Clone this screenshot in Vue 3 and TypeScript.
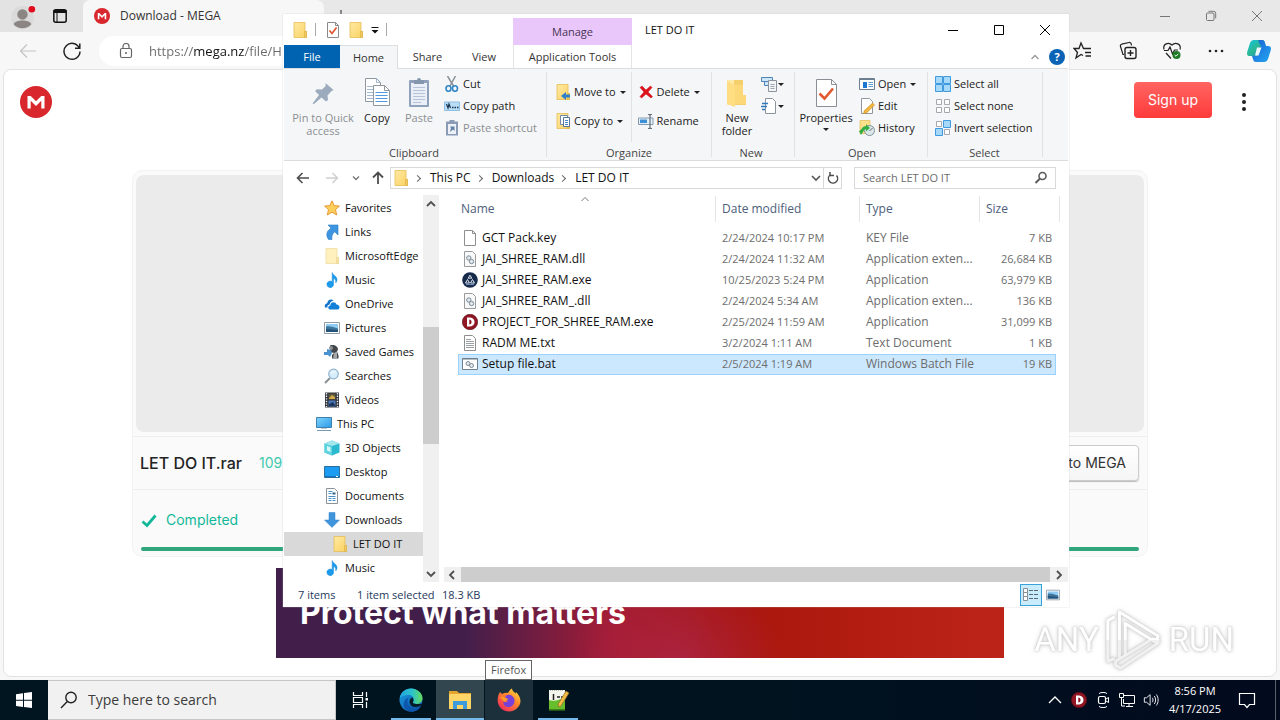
<script setup lang="ts">
import { ref } from 'vue'

interface TreeItem { label: string; icon: string; level: number; selected?: boolean }
interface FileRow { name: string; icon: string; date: string; type: string; size: string; selected?: boolean }

const tree: TreeItem[] = [
  { label: 'Favorites', icon: 'star', level: 1 },
  { label: 'Links', icon: 'link', level: 1 },
  { label: 'MicrosoftEdge', icon: 'folder-pale', level: 1 },
  { label: 'Music', icon: 'music', level: 1 },
  { label: 'OneDrive', icon: 'cloud', level: 1 },
  { label: 'Pictures', icon: 'picture', level: 1 },
  { label: 'Saved Games', icon: 'games', level: 1 },
  { label: 'Searches', icon: 'search-blue', level: 1 },
  { label: 'Videos', icon: 'video', level: 1 },
  { label: 'This PC', icon: 'pc', level: 0 },
  { label: '3D Objects', icon: 'cube', level: 1 },
  { label: 'Desktop', icon: 'desktop', level: 1 },
  { label: 'Documents', icon: 'document', level: 1 },
  { label: 'Downloads', icon: 'download', level: 1 },
  { label: 'LET DO IT', icon: 'folder', level: 2, selected: true },
  { label: 'Music', icon: 'music', level: 1 },
]

const files: FileRow[] = [
  { name: 'GCT Pack.key', icon: 'page', date: '2/24/2024 10:17 PM', type: 'KEY File', size: '7 KB' },
  { name: 'JAI_SHREE_RAM.dll', icon: 'dll', date: '2/24/2024 11:32 AM', type: 'Application exten...', size: '26,684 KB' },
  { name: 'JAI_SHREE_RAM.exe', icon: 'exe', date: '10/25/2023 5:24 PM', type: 'Application', size: '63,979 KB' },
  { name: 'JAI_SHREE_RAM_.dll', icon: 'dll', date: '2/24/2024 5:34 AM', type: 'Application exten...', size: '136 KB' },
  { name: 'PROJECT_FOR_SHREE_RAM.exe', icon: 'dred', date: '2/25/2024 11:59 AM', type: 'Application', size: '31,099 KB' },
  { name: 'RADM ME.txt', icon: 'txt', date: '3/2/2024 1:11 AM', type: 'Text Document', size: '1 KB' },
  { name: 'Setup file.bat', icon: 'bat', date: '2/5/2024 1:19 AM', type: 'Windows Batch File', size: '19 KB', selected: true },
]

const url = ref('https://mega.nz/file/H')
</script>

<template>
  <div class="screen">
    <svg class="sprite" aria-hidden="true">
      <defs>
        <linearGradient id="g-folder" x1="0" y1="0" x2="1" y2="1"><stop offset="0" stop-color="#ffe9a2" /><stop offset="1" stop-color="#fbd264" /></linearGradient>
        <linearGradient id="g-sky" x1="0" y1="0" x2="1" y2="1"><stop offset="0" stop-color="#7fd3ff" /><stop offset="1" stop-color="#2b9be6" /></linearGradient>
        <linearGradient id="g-edge" x1="0" y1="0" x2="1" y2="0"><stop offset="0" stop-color="#22a5e0" /><stop offset=".55" stop-color="#2cc3c9" /><stop offset="1" stop-color="#65dc59" /></linearGradient>
        <linearGradient id="g-edge2" x1="0" y1="0" x2="1" y2="1"><stop offset="0" stop-color="#1b9de2" /><stop offset="1" stop-color="#0c4fa2" /></linearGradient>
        <linearGradient id="g-fox" x1="1" y1="0" x2=".2" y2="1"><stop offset="0" stop-color="#fff04a" /><stop offset=".45" stop-color="#ff8a2a" /><stop offset="1" stop-color="#f0275d" /></linearGradient>
        <linearGradient id="g-cop1" x1="0" y1="0" x2="1" y2="1"><stop offset="0" stop-color="#14c3e0" /><stop offset=".5" stop-color="#2cb893" /><stop offset="1" stop-color="#1f7bd8" /></linearGradient>
        <linearGradient id="g-cop2" x1="0" y1="0" x2="1" y2="1"><stop offset="0" stop-color="#1b58c9" /><stop offset=".6" stop-color="#208be8" /><stop offset="1" stop-color="#1fa8ea" /></linearGradient>
        <linearGradient id="g-mark" x1="0" y1="0" x2="0" y2="1"><stop offset=".5" stop-color="#fff" /><stop offset=".5" stop-color="#f1f1f1" /></linearGradient>
      </defs>
      <symbol id="folder" viewBox="0 0 16 16"><path d="M2 .5h11v9h1.500v6H2z" fill="url(#g-folder)" stroke="#e6bd55" stroke-width=".8" /><path d="M12.500 9.500h2v6h-2z" fill="#f3cb5e" stroke="#d9ae48" stroke-width=".6" /></symbol>
      <symbol id="folder-pale" viewBox="0 0 16 16"><path d="M2 .5h11v9h1.500v6H2z" fill="#fff0bd" stroke="#f0dca0" stroke-width=".8" /><path d="M12.500 9.500h2v6h-2z" fill="#fae5a5" stroke="#e8d190" stroke-width=".6" /></symbol>
      <symbol id="propcheck" viewBox="0 0 16 16"><path d="M2.500.5h8l3 3v12h-11z" fill="#fff" stroke="#8a8a8a" /><path d="M10.500.5v3h3" fill="none" stroke="#8a8a8a" /><path d="M4.500 8.500l2.500 3 4.500-6" fill="none" stroke="#e0532f" stroke-width="1.700" /></symbol>
      <symbol id="star" viewBox="0 0 16 16"><path d="M8 .8l2.200 4.800 5.300.5-4 3.500 1.200 5.400L8 12.200 3.300 15l1.200-5.400-4-3.500 5.300-.5z" fill="#ffcf5c" stroke="#e29a3c" /></symbol>
      <symbol id="link" viewBox="0 0 16 16"><path d="M4 1h10v10l-3.200-3.200C8 10 7.500 12.500 8 15.500H4.500C1.500 11 2.500 7 7 4.200z" fill="#3d95e0" stroke="#2b7cc8" stroke-width=".6" /></symbol>
      <symbol id="music" viewBox="0 0 16 16"><path d="M8.200.5c.5 3 4.800 3.500 4.800 7 0 1.500-.5 2.500-1.300 3.300.5-2.800-.8-4-2.200-4.300V12a3.300 3.300 0 1 1-1.300-2.300z" fill="#1a9bec" stroke="#1487d4" stroke-width=".5" /></symbol>
      <symbol id="cloud" viewBox="0 0 16 16"><path d="M1 11.500C.3 9 1.500 7.500 3.200 7.300 3.500 4 7 2.500 9.700 4.500 6.500 5 5.700 7.500 5.600 8.500c-2 .2-2.500 1.800-2 3z" fill="#0f74c9" /><path d="M5.500 13.500c-2-.8-1.500-4 .8-4 0-3.500 5-4.500 6.200-1 3.500 0 4 4.500 1.200 5z" fill="#1381da" /></symbol>
      <symbol id="picture" viewBox="0 0 16 16"><path d="M.5 2.500h15v11H.5z" fill="#fff" stroke="#919ba5" /><path d="M2 4h12v8H2z" fill="#8ecbf5" /><path d="M2 6.500c4-1 8 1 12 2V12H2z" fill="#3f759b" /><path d="M2 9c4 0 7 1 12 1v2H2z" fill="#23527a" /></symbol>
      <symbol id="games" viewBox="0 0 16 16"><path d="M6 1.500c4-1.500 8 1 8 4l-1 2 1.500 4v3H8V11l2-2-4-1z" fill="#43474b" /><path d="M10 9l3-1.500v6.500l-4 1z" fill="#a4a7aa" /><path d="M0 8h3V5l4 1 1 3-2 4-2-2H0z" fill="#4a93cf" /><circle cx="7" cy="4" r="2" fill="#8c9298" /></symbol>
      <symbol id="search-blue" viewBox="0 0 16 16"><path d="M6 10l-5 5" stroke="#8a8f94" stroke-width="2" /><circle cx="9.500" cy="6" r="4.800" fill="#d6eefb" stroke="#91b4ce" stroke-width="1.200" /><path d="M7 6c1-2 3-3 5-2" fill="none" stroke="#fff" /></symbol>
      <symbol id="video" viewBox="0 0 16 16"><path d="M1 .5h14v15H1z" fill="#30343a" /><path d="M2.500 1v14M13.500 1v14" stroke="#e8eaec" stroke-width="1.400" stroke-dasharray="1.400 1.200" /><path d="M4.500 1.500h7v6h-7z" fill="#5c5640" /><path d="M4.500 8.500h7v6h-7z" fill="#4b78b8" /><path d="M5 6l3-3 3 2v2H5z" fill="#d0a948" /><path d="M5 12l4-2 2 3v1H5z" fill="#1d365e" /></symbol>
      <symbol id="pc" viewBox="0 0 16 16"><path d="M.5 1.500h15v10H.5z" fill="url(#g-sky)" stroke="#3f7fae" /><path d="M1 14.500h14" stroke="#7c9aaf" /><path d="M5 12.500h6" stroke="#b8cbd8" /></symbol>
      <symbol id="cube" viewBox="0 0 16 16"><path d="M8 .5l7.500 3v9L8 15.500.5 12.500v-9z" fill="#2bb9cf" /><path d="M8 .5l7.500 3L8 6 .5 3.500z" fill="#a4e8ee" /><path d="M.5 3.500L8 6v9.500L.5 12.500z" fill="#5fd4df" /><path d="M3 6l3.500 1.500V12L3 10.500z" fill="#d7f6f8" /></symbol>
      <symbol id="desktop" viewBox="0 0 16 16"><path d="M.5 2.500h15v11H.5z" fill="#1b9cf2" stroke="#2a6d9e" /><path d="M1 12.500h14" stroke="#1173bd" /><path d="M12 12.500h2" stroke="#fff" /></symbol>
      <symbol id="document" viewBox="0 0 16 16"><path d="M2.500.5h8l3 3v12h-11z" fill="#fff" stroke="#8c9298" /><path d="M4.500 3.500h4M4.500 5.500h3M4.500 8.500h7M4.500 10.500h3M8.500 10.500h3M4.500 12.500h3M8.500 12.500h3" stroke="#4790c8" /><path d="M8.500 5.500h3" stroke="#2b5f8a" stroke-width="2" /></symbol>
      <symbol id="download" viewBox="0 0 16 16"><path d="M5 .5h6V8h4.500L8 15.500.5 8H5z" fill="#3f94dc" stroke="#3284cb" stroke-width=".5" /></symbol>
      <symbol id="page" viewBox="0 0 16 16"><path d="M2.500.5h8l3 3v12h-11z" fill="#fff" stroke="#8f8f8f" /><path d="M10.500.5v3h3" fill="none" stroke="#8f8f8f" /></symbol>
      <symbol id="dll" viewBox="0 0 16 16"><path d="M2.500.5h8l3 3v12h-11z" fill="#f8f9fa" stroke="#9a9a9a" /><circle cx="6.800" cy="7" r="2.200" fill="#e2e8ec" stroke="#7d8b96" /><circle cx="9.500" cy="10.500" r="2.200" fill="#e2e8ec" stroke="#7d8b96" /></symbol>
      <symbol id="exe" viewBox="0 0 16 16"><circle cx="8" cy="8" r="7.800" fill="#172a4a" /><path d="M8 3.200l-1.800 3h3.600zM5.500 7.500l-2 3.500h4zM10.500 7.500l2 3.500h-4z" fill="none" stroke="#dce6f3" /><path d="M4 12.500h8" stroke="#6e8cb5" /></symbol>
      <symbol id="dred" viewBox="0 0 16 16"><circle cx="8" cy="8" r="7.700" fill="#8f1622" stroke="#5b0e17" stroke-width=".6" /><path d="M5 3.500h3c6 0 6 9 0 9H5z M7.300 5.500v5c3 0 3-5 0-5z" fill="#fff" fill-rule="evenodd" /></symbol>
      <symbol id="txt" viewBox="0 0 16 16"><path d="M2.500.5h8l3 3v12h-11z" fill="#fff" stroke="#8f8f8f" /><path d="M4 4.500h5M4 6.500h8M4 8.500h8M4 10.500h8M4 12.500h8" stroke="#9aa0a5" /></symbol>
      <symbol id="bat" viewBox="0 0 16 16"><path d="M.5 2.500h15v11H.5z" fill="#fff" stroke="#6f7f8c" /><path d="M.5 3h15" stroke="#6f7f8c" /><circle cx="6" cy="7.500" r="2" fill="#e4e9ed" stroke="#7c8892" /><circle cx="9.500" cy="9.500" r="2" fill="#e4e9ed" stroke="#7c8892" /></symbol>
      <symbol id="pin" viewBox="0 0 32 32"><path d="M18.500 6l8 7-2.500 1.500-3.500 4 .5 4.500-2 1.500-4.500-4L7 27l-1.500-.5 6.500-8.500L8 14l2-1.800 5 .3 3.700-3.500z" fill="#9babbd" /></symbol>
      <symbol id="copy" viewBox="0 0 32 32"><path d="M4.500 1.500h11l4 4v19h-15z" fill="#fff" stroke="#8f979f" /><path d="M15.500 1.500v4h4M6 9.500h11M6 12.500h11M6 15.500h11M6 18.500h11M6 21.500h11" fill="none" stroke="#a2b9d0" /><path d="M12.500 8.500h11l5 5v15h-16z" fill="#fff" stroke="#8f979f" /><path d="M23.500 8.500v5h5" fill="none" stroke="#8f979f" /><path d="M14.500 15.500h12M14.500 18.500h12M14.500 21.500h12M14.500 24.500h12" stroke="#4e9be0" /></symbol>
      <symbol id="paste" viewBox="0 0 32 32"><rect x="6" y="3" width="20" height="27" rx="1" fill="#8fa1bb" /><path d="M8 6h16v22H8z" fill="#e9eef7" /><path d="M10 10.500h12M10 13.500h12M10 16.500h12M10 19.500h12M10 22.500h12M10 25.500h8" stroke="#b6c3d8" /><path d="M11 3h3a2 2 0 0 1 4 0h3v4H11z" fill="#8496ae" /></symbol>
      <symbol id="cut" viewBox="0 0 16 16"><path d="M3.500 0l6 10M11.500 0L6 10" stroke="#8a9198" stroke-width="1.500" /><ellipse cx="4.500" cy="12.500" rx="2.500" ry="2.800" fill="none" stroke="#2f86c6" stroke-width="1.600" /><ellipse cx="11" cy="12.500" rx="2.500" ry="2.800" fill="none" stroke="#2f86c6" stroke-width="1.600" /></symbol>
      <symbol id="copypath" viewBox="0 0 16 16"><path d="M.5 4h15v8.500H.5z" fill="#b9dcf7" stroke="#8fbfe4" /><path d="M2.500 6l1.500 4 1-4 1.500 4" fill="none" stroke="#17334d" stroke-width="1.200" /><path d="M8 9.500h1.500M10.500 9.500H12M13 9.500h1.500" stroke="#17334d" stroke-width="1.300" /></symbol>
      <symbol id="pasteshort" viewBox="0 0 16 16"><path d="M2 1.500h12v14H2z" fill="#8a9cb5" /><path d="M4 4h8v10H4z" fill="#eef2f8" /><path d="M5.500 0h5v3h-5z" fill="#8a9cb5" /><path d="M6 12l1-4-1-1.500h4.500V11L9 9.500z" fill="#6080a4" /></symbol>
      <symbol id="moveto" viewBox="0 0 16 16"><use href="#folder" /><path d="M15 10.500h-4V8l-5 4 5 4v-2.500h4z" fill="#2f80c8" /></symbol>
      <symbol id="copyto" viewBox="0 0 16 16"><use href="#folder" /><path d="M5.500 2.500h7v9h-7z" fill="#fff" stroke="#6f8aa6" /><path d="M8.500 4.500h6v9h-6z" fill="#fff" stroke="#5377a0" /><path d="M10 7.500h3M10 9.500h3M10 11.500h3" stroke="#4a8bd0" /></symbol>
      <symbol id="delete" viewBox="0 0 16 16"><path d="M2 3.500L4 2l4 4 4.500-4L14 3.500 10 8l4.500 4.500L13 14 8 10l-4.500 4L2 12.500 6 8z" fill="#e0121c" stroke="#c00d16" stroke-width=".5" /></symbol>
      <symbol id="rename" viewBox="0 0 16 16"><path d="M.5 5h14.500v6.500H.5z" fill="#e3f1fc" stroke="#8499ad" /><path d="M2 6.500h7V10H2z" fill="#3c8fd4" /><path d="M12 2.500v12M10 1.500h1.500l.5 1 .5-1H14M10 15.500h1.500l.5-1 .5 1H14" fill="none" stroke="#66707a" stroke-width="1.200" /></symbol>
      <symbol id="newfolder" viewBox="0 0 32 32"><path d="M6 3h16v15h3v10H6z" fill="#f5cf6b" /><path d="M6 3h7v25H6z" fill="#ffe9a6" /><path d="M6 4l8 4v22l-8-3z" fill="#ffdd83" /><path d="M14 8h8v10h3v9H14z" fill="#fcd878" /></symbol>
      <symbol id="newitem" viewBox="0 0 16 16"><path d="M.5 1.500h11v4H.5z" fill="#cfe7fa" stroke="#4e84b3" /><path d="M3.500 5.500h4v4h-4z" fill="#cfe7fa" stroke="#4e84b3" /><path d="M7.500 4.500h8v11h-8z" fill="#f3f5f7" stroke="#8b949d" /><path d="M9.500 8.500h4M9.500 10.500h4M9.500 12.500h4" stroke="#9ba8b5" /></symbol>
      <symbol id="easy" viewBox="0 0 16 16"><path d="M4.500.5h7l3 3v12h-10z" fill="#fff" stroke="#8b949d" /><path d="M1 5.500h6M0 8.500h6M1 11.500h3" stroke="#2f78bd" stroke-width="1.300" /></symbol>
      <symbol id="properties" viewBox="0 0 32 32"><path d="M6.500 2.500h15l5 5v22h-20z" fill="#fff" stroke="#8a8f95" /><path d="M21.500 2.500v5h5" fill="none" stroke="#8a8f95" /><path d="M9.500 16.500l5 5 8.500-10" fill="none" stroke="#e2582f" stroke-width="2.600" /></symbol>
      <symbol id="open" viewBox="0 0 16 16"><path d="M.5 2.500h15v11H.5z" fill="#fff" stroke="#6c7f90" /><path d="M.5 3.500h15" stroke="#6c7f90" /><path d="M4 6h4v6H4z" fill="#1a78ce" /><path d="M9.500 6.500H14M9.500 8.500H14M9.500 10.500H14" stroke="#5f9fd8" /></symbol>
      <symbol id="edit" viewBox="0 0 16 16"><path d="M2.500.5h8l3 3v12h-11z" fill="#fff" stroke="#8f979f" /><path d="M13.500 5l2 2-8 8-3 .5.700-2.700z" fill="#f4b73e" stroke="#c58a2a" stroke-width=".6" /></symbol>
      <symbol id="history" viewBox="0 0 16 16"><path d="M1 .5h10v13H1z" fill="#ffe08a" stroke="#e0bb58" stroke-width=".7" /><circle cx="10.500" cy="10.500" r="5" fill="#dce8ea" stroke="#7d9296" /><path d="M10.500 11l3-3" stroke="#59686c" /><path d="M0 11c2 0 3-5 7-5V4l4 4-4 3.500V9c-2 .5-3.500 4-5 6z" fill="#36ad45" /></symbol>
      <symbol id="selall" viewBox="0 0 16 16"><path d="M.5.5h7v7h-7zM8.500.5h7v7h-7zM.5 8.500h7v7h-7zM8.500 8.500h7v7h-7z" fill="#a6d8fa" stroke="#3f9ade" /></symbol>
      <symbol id="selnone" viewBox="0 0 16 16"><path d="M1.500 1.500h5v5h-5zM9.500 1.500h5v5h-5zM1.500 9.500h5v5h-5zM9.500 9.500h5v5h-5z" fill="#fff" stroke="#a5a9ad" /></symbol>
      <symbol id="selinv" viewBox="0 0 16 16"><path d="M1.500 1.500h5v5h-5zM9.500 9.500h5v5h-5z" fill="#fff" stroke="#a5a9ad" /><path d="M8.500.5h7v7h-7zM.5 8.500h7v7h-7z" fill="#a6d8fa" stroke="#3f9ade" /></symbol>
      <symbol id="glass" viewBox="0 0 16 16"><circle cx="9.500" cy="6" r="3.500" fill="none" stroke="#5b5b5b" stroke-width="1.600" /><path d="M7 8.500L2.500 13" stroke="#5b5b5b" stroke-width="2" /></symbol>
      <symbol id="mega" viewBox="0 0 32 32"><circle cx="16" cy="16" r="16" fill="#d9272e" /><path d="M7.500 22.500V10h3.200l5.300 5.300L21.300 10h3.200v12.500h-3.200v-7.800L16 20l-5.300-5.300v7.800z" fill="#fff" /></symbol>
    </svg>

    <!-- Browser -->
    <main class="browser">
      <header class="tabs">
        <div class="tabs-left">
          <svg class="avatar" viewBox="0 0 24 24"><circle cx="11" cy="13" r="11" fill="#dadada" /><circle cx="11" cy="10" r="5" fill="#8b8683" /><path d="M2.500 19.500c1-5 16-5 17 0-4 5-13 5-17 0z" fill="#8b8683" /><circle cx="20" cy="5" r="3.200" fill="#e00b1c" /></svg>
          <svg class="i16" viewBox="0 0 16 16"><rect x="1.800" y="1.800" width="12.400" height="12.400" rx="2" fill="none" stroke="#111" stroke-width="1.500" /><path d="M1.500 3.500h13" stroke="#111" stroke-width="3" /><path d="M5 4v10" stroke="#111" /></svg>
        </div>
        <div class="tab"><svg class="i16"><use href="#mega" /></svg><span>Download - MEGA</span></div>
        <button class="newtab" aria-label="New tab"><svg class="i12" viewBox="0 0 12 12"><path d="M6 0v12M0 6h12" stroke="#222" /></svg></button>
        <div class="winctl">
          <button aria-label="Minimize"><svg class="i12" viewBox="0 0 12 12"><path d="M1 6.500h10" stroke="#777" /></svg></button>
          <button aria-label="Restore"><svg class="i12" viewBox="0 0 12 12"><rect x="1.500" y="3" width="7.500" height="7.500" rx="1" fill="none" stroke="#777" /><path d="M3.500 1.300h5.200a2 2 0 0 1 2 2v5" fill="none" stroke="#777" /></svg></button>
          <button aria-label="Close"><svg class="i12" viewBox="0 0 12 12"><path d="M1 1l10 10M11 1L1 11" stroke="#777" /></svg></button>
        </div>
      </header>
      <div class="toolbar">
        <button aria-label="Back"><svg class="i20" viewBox="0 0 20 20"><path d="M9 3.500L2.500 10 9 16.500M2.500 10H18" fill="none" stroke="#c4c4c4" stroke-width="1.200" /></svg></button>
        <button aria-label="Refresh"><svg class="i20" viewBox="0 0 20 20"><path d="M17.300 7A8 8 0 1 0 18 10.500M17.800 2.500V7.300H13" fill="none" stroke="#222" stroke-width="1.500" /></svg></button>
        <label class="urlbar">
          <svg class="i16" viewBox="0 0 16 16"><rect x="2.500" y="5.500" width="11" height="9" rx="1.500" fill="none" stroke="#666" stroke-width="1.200" /><path d="M5 5.500V3.500a3 3 0 0 1 6 0v2" fill="none" stroke="#666" stroke-width="1.200" /><circle cx="8" cy="10" r="1" fill="#666" /></svg>
          <input v-model="url" type="text" aria-label="Address" />
        </label>
        <button class="fav" aria-label="Favorites"><svg class="i20" viewBox="0 0 20 20"><path d="M10 14.500L8 13.500l-5 3.500 1.500-5.500L1 7.500h5l2-5.500 2.500 5.500H18M12 11.500h6M12.500 15h5.500" fill="none" stroke="#222" stroke-width="1.300" /></svg></button>
        <button aria-label="Collections"><svg class="i20" viewBox="0 0 20 20"><path d="M6 13.500H5L2.500 5.500c-.3-1 .2-2 1.200-2.300L11 1.500c1-.2 2 .3 2.200 1.300l.3 1.500" fill="none" stroke="#222" stroke-width="1.200" /><rect x="7" y="6.500" width="11" height="11" rx="2" fill="none" stroke="#222" stroke-width="1.400" /><path d="M12.500 9v6M9.500 12h6" stroke="#222" stroke-width="1.400" /></svg></button>
        <button aria-label="Browser essentials"><svg class="i20" viewBox="0 0 20 20"><path d="M2 8.500C.5 3 6.500.5 10 4c3.500-3.500 9.500-1 8 4.500M4 12l5 5.500M2 9.500h4l2-3.500 2.500 7 2-4H16" fill="none" stroke="#222" stroke-width="1.200" /><circle cx="14.500" cy="14" r="4" fill="#1d7a27" /><path d="M12.700 14l1.300 1.300 2.300-2.500" fill="none" stroke="#fff" /></svg></button>
        <button aria-label="More"><svg class="i20" viewBox="0 0 20 20"><circle cx="4" cy="10" r="1.300" fill="#222" /><circle cx="10" cy="10" r="1.300" fill="#222" /><circle cx="16" cy="10" r="1.300" fill="#222" /></svg></button>
        <button class="copilot" aria-label="Copilot"><svg class="i24" viewBox="0 0 24 24"><path d="M7 1h8c2 0 2.500 1 3 3l1 4h-5L9 17H3c-3 0-3.500-2-2.500-5L3 4C3.800 2 5 1 7 1z" fill="url(#g-cop1)" /><path d="M11 1h4c2 0 2.500 1 3 3l1 3h2c3 0 3.500 2 2.500 5l-2.500 8c-.8 2-2 3-4 3H9c-2 0-2.500-1-3-3l-1-3h3c1.500 0 2.500-1 3-2.500L13 8c.5-1 1-1 2-1-3 0-3-6-4-6z" fill="url(#g-cop2)" /><path d="M10 8.500h4.500l-3 8H8z" fill="#eef8fc" /></svg></button>
      </div>

      <section class="page">
        <header class="site-head">
          <svg class="i32"><use href="#mega" /></svg>
          <button class="signup">Sign up</button>
          <button class="kebab" aria-label="Menu"><i></i><i></i><i></i></button>
        </header>
        <article class="card">
          <div class="preview"></div>
          <div class="filebar"><h1>LET DO IT.rar</h1><span class="size">109 MB</span><button>Save to MEGA</button></div>
          <div class="done"><svg class="i16" viewBox="0 0 16 16"><path d="M1.500 9.500L6 13.500 14.500 3.500" fill="none" stroke="#12b899" stroke-width="2.800" /></svg><span>Completed</span></div>
          <div class="progress"></div>
        </article>
        <aside class="banner">Protect what matters</aside>
      </section>

      <div class="watermark" aria-hidden="true">
        <span>ANY</span>
        <svg viewBox="0 0 60 64"><path d="M15 50V3l40 25-3 6-31-19v33M10 8L3 12v42l7-3M21 48l28-17 6 1v3L16 61l-5-3v-4zM21 15v0" fill="none" stroke="url(#g-mark)" stroke-width="3" stroke-linejoin="round" /></svg>
        <span>RUN</span>
      </div>
    </main>

    <!-- File explorer window -->
    <section class="explorer">
      <div class="titlebar">
        <div class="quick">
          <svg class="i16"><use href="#folder" /></svg><i class="bar"></i>
          <svg class="i16"><use href="#propcheck" /></svg>
          <svg class="i16"><use href="#folder" /></svg>
          <svg class="i8" viewBox="0 0 8 8"><path d="M.5 1.500h7" stroke="#111" /><path d="M.5 4h7L4 7.500z" fill="#111" /></svg><i class="bar"></i>
        </div>
        <div class="manage">Manage</div>
        <h2>LET DO IT</h2>
        <div class="wc">
          <button aria-label="Minimize"><svg class="i12" viewBox="0 0 12 12"><path d="M1 6.500h10" stroke="#000" /></svg></button>
          <button aria-label="Maximize"><svg class="i12" viewBox="0 0 12 12"><path d="M1.500 1.500h9v9h-9z" fill="none" stroke="#000" /></svg></button>
          <button aria-label="Close"><svg class="i12" viewBox="0 0 12 12"><path d="M1 1l10 10M11 1L1 11" stroke="#000" /></svg></button>
        </div>
      </div>
      <nav class="ribbon-tabs">
        <button class="file">File</button><button class="home">Home</button><button class="share">Share</button><button class="view">View</button><button class="apptools">Application Tools</button>
        <span class="grow"></span>
        <svg class="i8" viewBox="0 0 8 8"><path d="M.5 6L4 2.500 7.500 6" fill="none" stroke="#999" stroke-width="1.300" /></svg>
        <button class="help" aria-label="Help">?</button>
      </nav>
      <div class="ribbon">
        <div class="group clipboard">
          <div class="cmds">
            <button class="big off wpin"><svg class="i32"><use href="#pin" /></svg>Pin to Quick<br />access</button>
            <button class="big wcopy"><svg class="i32"><use href="#copy" /></svg>Copy</button>
            <button class="big off wpaste"><svg class="i32"><use href="#paste" /></svg>Paste</button>
            <div class="stack">
              <button><svg class="i16"><use href="#cut" /></svg>Cut</button>
              <button><svg class="i16"><use href="#copypath" /></svg>Copy path</button>
              <button class="off"><svg class="i16"><use href="#pasteshort" /></svg>Paste shortcut</button>
            </div>
          </div>
          <div class="caption">Clipboard</div>
        </div>
        <div class="group organize">
          <div class="cmds">
            <div class="stack loose">
              <button><svg class="i16"><use href="#moveto" /></svg>Move to<i class="dd"></i></button>
              <button><svg class="i16"><use href="#copyto" /></svg>Copy to<i class="dd"></i></button>
            </div>
            <div class="stack loose divided">
              <button><svg class="i16"><use href="#delete" /></svg>Delete<i class="dd"></i></button>
              <button><svg class="i16"><use href="#rename" /></svg>Rename</button>
            </div>
          </div>
          <div class="caption">Organize</div>
        </div>
        <div class="group new">
          <div class="cmds">
            <button class="big wnew"><svg class="i32"><use href="#newfolder" /></svg>New<br />folder</button>
            <div class="stack">
              <button aria-label="New item"><svg class="i16"><use href="#newitem" /></svg><i class="dd"></i></button>
              <button aria-label="Easy access"><svg class="i16"><use href="#easy" /></svg><i class="dd"></i></button>
            </div>
          </div>
          <div class="caption">New</div>
        </div>
        <div class="group openg">
          <div class="cmds">
            <button class="big wprop"><svg class="i32"><use href="#properties" /></svg>Properties<i class="dd"></i></button>
            <div class="stack">
              <button><svg class="i16"><use href="#open" /></svg>Open<i class="dd"></i></button>
              <button><svg class="i16"><use href="#edit" /></svg>Edit</button>
              <button><svg class="i16"><use href="#history" /></svg>History</button>
            </div>
          </div>
          <div class="caption">Open</div>
        </div>
        <div class="group select">
          <div class="cmds">
            <div class="stack">
              <button><svg class="i16"><use href="#selall" /></svg>Select all</button>
              <button><svg class="i16"><use href="#selnone" /></svg>Select none</button>
              <button><svg class="i16"><use href="#selinv" /></svg>Invert selection</button>
            </div>
          </div>
          <div class="caption">Select</div>
        </div>
      </div>

      <div class="address">
        <div class="arrows">
          <button aria-label="Back"><svg class="i14" viewBox="0 0 14 14"><path d="M6.500 2L1.500 7l5 5M1.500 7H13" fill="none" stroke="#4d4d4d" stroke-width="1.600" /></svg></button>
          <button aria-label="Forward"><svg class="i14" viewBox="0 0 14 14"><path d="M7.500 2l5 5-5 5M12.500 7H1" fill="none" stroke="#d0d0d0" stroke-width="1.500" /></svg></button>
          <button aria-label="Recent"><svg class="i8" viewBox="0 0 8 8"><path d="M1 2.500l3 3 3-3" fill="none" stroke="#777" stroke-width="1.400" /></svg></button>
          <button aria-label="Up"><svg class="i14" viewBox="0 0 14 14"><path d="M2 6.500l5-5 5 5M7 1.500V13" fill="none" stroke="#4d4d4d" stroke-width="1.800" /></svg></button>
        </div>
        <div class="crumbs">
          <svg class="i16"><use href="#folder" /></svg>
          <i class="sep"></i><a href="#">This PC</a><i class="sep"></i><a href="#">Downloads</a><i class="sep"></i><a href="#">LET DO IT</a>
          <span class="grow"></span>
          <svg class="i10" viewBox="0 0 10 10"><path d="M1 3l4 4 4-4" fill="none" stroke="#555" stroke-width="1.600" /></svg>
          <button class="reload" aria-label="Refresh"><svg class="i14" viewBox="0 0 14 14"><path d="M10.500 4.500A4.600 4.600 0 1 1 4 4M4 1v3.500h4" fill="none" stroke="#4d4d4d" stroke-width="1.500" /></svg></button>
        </div>
        <label class="find"><input type="text" placeholder="Search LET DO IT" aria-label="Search LET DO IT" /><svg class="i16"><use href="#glass" /></svg></label>
      </div>

      <div class="body">
        <ul class="tree">
          <li v-for="(t, i) in tree" :key="i" :class="['lvl' + t.level, { sel: t.selected }]"><svg class="i16"><use :href="'#' + t.icon" /></svg><span>{{ t.label }}</span></li>
        </ul>
        <div class="vscroll">
          <svg class="i10" viewBox="0 0 10 10"><path d="M1 7l4-4 4 4" fill="none" stroke="#505050" stroke-width="1.800" /></svg>
          <div class="vtrack"><div class="vthumb"></div></div>
          <svg class="i10" viewBox="0 0 10 10"><path d="M1 3l4 4 4-4" fill="none" stroke="#505050" stroke-width="1.800" /></svg>
        </div>
        <div class="list">
          <svg class="sort" viewBox="0 0 8 8"><path d="M.5 6L4 2.500 7.500 6" fill="none" stroke="#777" /></svg>
          <table>
            <colgroup><col class="c-name" /><col class="c-date" /><col class="c-type" /><col class="c-size" /></colgroup>
            <thead><tr><th><div>Name</div></th><th><div>Date modified</div></th><th><div>Type</div></th><th><div>Size</div></th></tr></thead>
            <tbody>
              <tr v-for="f in files" :key="f.name" :class="{ sel: f.selected }">
                <td class="fname"><span><svg class="i16"><use :href="'#' + f.icon" /></svg>{{ f.name }}</span></td>
                <td class="digits">{{ f.date }}</td><td>{{ f.type }}</td><td class="digits num">{{ f.size }}</td>
              </tr>
            </tbody>
          </table>
          <div class="hscroll">
            <svg class="i10" viewBox="0 0 10 10"><path d="M7 1L3 5l4 4" fill="none" stroke="#505050" stroke-width="1.800" /></svg>
            <div class="hthumb"></div>
            <svg class="i10" viewBox="0 0 10 10"><path d="M3 1l4 4-4 4" fill="none" stroke="#505050" stroke-width="1.800" /></svg>
          </div>
        </div>
      </div>

      <footer class="status">
        <span class="count">7 items</span><span class="chosen">1 item selected</span><span>18.3 KB</span>
        <span class="grow"></span>
        <button class="vbtn on" aria-label="Details view"><svg class="i16" viewBox="0 0 16 16"><path d="M.5 1.500h4v4h-4zM.5 5.500h4v4h-4zM.5 9.500h4v4h-4z" fill="#fff" stroke="#8a8f96" /><path d="M6 3.500h4M11 3.500h4M6 7.500h4M11 7.500h4M6 11.500h4M11 11.500h4" stroke="#5b6670" /></svg></button>
        <button class="vbtn" aria-label="Thumbnails view"><svg class="i14"><use href="#picture" /></svg></button>
      </footer>
    </section>

    <!-- Taskbar -->
    <footer class="taskbar">
      <button class="start" aria-label="Start"><svg class="i16" viewBox="0 0 16 16"><path d="M0 2.300L7 1.300v6.400H0zM8 1.100L16 0v7.700H8zM0 8.700h7v6.200l-7-1zM8 8.700h8V16l-8-1.100z" fill="#fff" /></svg></button>
      <label class="tsearch">
        <svg class="i18" viewBox="0 0 18 18"><circle cx="11" cy="6.500" r="5.200" fill="none" stroke="#222" stroke-width="1.400" /><path d="M7.300 10.500L1 17" stroke="#222" stroke-width="1.400" /></svg>
        <input type="text" placeholder="Type here to search" aria-label="Type here to search" />
      </label>
      <button class="tb view-tasks" aria-label="Task View"><svg class="i18" viewBox="0 0 18 18"><path d="M2.500 1v3.500h9V1M2.500 17v-3.500h9V17M2.500 6.500h9v5h-9zM15.500 1v5M15.500 11v6" fill="none" stroke="#fff" stroke-width="1.200" /><path d="M14.500 7h2.500v2.500h-2.500z" fill="#fff" /></svg></button>
      <button class="tb run" aria-label="Edge"><svg class="i24" viewBox="0 0 24 24"><circle cx="12" cy="12" r="11.500" fill="url(#g-edge2)" /><path d="M.8 10C2 4 6.500.5 12 .5c6 0 11.500 4.500 11.500 9.500 0 4-3 6-6 6-2.500 0-4-1-3.500-2 1.500-2.500.5-6.500-3.500-7C6.500 6.500 2.500 8 .8 10z" fill="url(#g-edge)" /><path d="M8.500 13c0 5 4.500 7.500 9 7 2-.2 3.500-1 4.500-2-3 6-10 7-14.500 4-4-3-4-10 2.500-13-1 1-1.500 2.500-1.500 4z" fill="#0c56ac" /><path d="M13.500 9.500c1.500 2 1 3.500.5 4.500-.4 1 1 2 3.500 2h6c-3 4-12 4.500-13-1.500-.3-2 .7-4.500 3-5z" fill="#061c28" /></svg></button>
      <button class="tb run active" aria-label="File Explorer"><svg class="i24" viewBox="0 0 24 24"><path d="M1 3h8l2 2h12v5H1z" fill="#e5a52c" /><path d="M1 6h22v15H1z" fill="#ffd567" /><path d="M5 13h14v8H5z" fill="#3d9bdb" /><path d="M9 17h6v4H9z" fill="#ffd567" /></svg></button>
      <button class="tb hover" aria-label="Firefox"><svg class="i24" viewBox="0 0 24 24"><path d="M3 4l2 2c2-1 4-1.500 6-1 1-2 2-3.500 4-4.500 0 2 2 3.500 3.500 5L19 4c3 3 4.500 6 4.500 9.500C23 19 18 23.500 12 23.500S1 19 .7 13C.5 9 1.500 6.500 3 4z" fill="url(#g-fox)" /><path d="M9 7.500c4-2 9 1 8.500 6-.5 4-4 6-7 5.500-3-.5-4.500-3-4-5.500 1 1 3 1 4.500-.5C8.500 12 7 11 9 7.500z" fill="#7740d9" /><path d="M3 9c2-1 4-.5 6 1l2 1c-.5 1.500-2.500 1.500-3.500 3" fill="#ff9a2b" /></svg></button>
      <button class="tb run" aria-label="Notepad++"><svg class="i24" viewBox="0 0 24 24"><path d="M3 2h16v20H3z" fill="#f4f6ee" /><path d="M3 12c5 2 10 0 16-3v13H3z" fill="#67be2c" /><path d="M3 22h16" stroke="#2d6d12" stroke-width="1.500" /><path d="M4 2.500h14" stroke="#b8bab0" stroke-dasharray="1 1" /><path d="M7.500 6v6M11 9h3M15 9h3" stroke="#222" stroke-width="1.500" /><path d="M20 3l3 2-8 13-3 1 .5-3.500z" fill="#f2bb45" stroke="#8d6d27" stroke-width=".7" /></svg></button>
      <span class="grow"></span>
      <div class="tray">
        <svg class="i16" viewBox="0 0 16 16"><path d="M2 11l6-6 6 6" fill="none" stroke="#fff" stroke-width="1.300" /></svg>
        <svg class="i16"><use href="#dred" /></svg>
        <svg class="i16" viewBox="0 0 16 16"><rect x="3.500" y="4.500" width="7" height="7" rx="1.500" fill="none" stroke="#fff" stroke-width="1.200" /><path d="M11 7l2.500-1.500v5L11 9M4 1.500c2.500-1.500 5.500-1.500 8 0M4 14.500c2.500 1.500 5.500 1.500 8 0" fill="none" stroke="#fff" /></svg>
        <svg class="i16" viewBox="0 0 16 16"><path d="M5 3.500h10.500v8H4.500V7M10 11.500V14M7 14.500h7M.5 1.500h4v4h-4zM2.500 5.500v8.500H6" fill="none" stroke="#fff" /></svg>
        <svg class="i16" viewBox="0 0 18 18"><path d="M1.500 6.500h2.500l4-3.500v12l-4-3.500H1.500zM10.500 6.500c1 1.500 1 3.500 0 5M12.700 4.500c2 2.500 2 6.500 0 9M15 2.800c2.700 3.500 2.700 9 0 12.400" fill="none" stroke="#fff" /></svg>
      </div>
      <time><span>8:56 PM</span><span>4/17/2025</span></time>
      <button class="notes" aria-label="Notifications"><svg class="i18" viewBox="0 0 18 18"><path d="M1.500 2.500h15v11h-5l-2.500 3-2.500-3h-5z" fill="none" stroke="#fff" stroke-width="1.200" /></svg></button>
      <div class="tooltip">Firefox</div>
    </footer>
  </div>
</template>

<style>
html, body { margin: 0; overflow: hidden; }
</style>

<style scoped>
* { box-sizing: border-box; }
.screen { position: relative; display: flex; flex-direction: column; height: 100vh; overflow: hidden; background: #f7f7f7; color: #111; font: 12px/16px "Open Sans", "Noto Sans", sans-serif; }
.sprite { position: absolute; width: 0; height: 0; }
button, input { margin: 0; padding: 0; border: 0; background: none; font: inherit; color: inherit; outline: 0; }
button { display: inline-flex; align-items: center; justify-content: center; white-space: nowrap; }
svg { display: block; flex: none; }
.grow { flex: 1; }
.i8 { width: 8px; height: 8px; } .i10 { width: 10px; height: 10px; } .i12 { width: 12px; height: 12px; } .i14 { width: 14px; height: 14px; }
.i16 { width: 16px; height: 16px; } .i18 { width: 18px; height: 18px; } .i20 { width: 20px; height: 20px; } .i24 { width: 24px; height: 24px; } .i32 { width: 32px; height: 32px; }

.browser { position: relative; flex: 1; min-height: 0; display: flex; flex-direction: column; padding-bottom: 3px; }
.tabs { display: flex; height: 32px; flex: none; background: #e8e8e8; }
.tabs-left { display: flex; align-items: center; gap: 16px; width: 83px; padding-left: 11px; background: #e3e3e3; }
.avatar { width: 25px; height: 25px; }
.tab { display: flex; align-items: center; gap: 10px; width: 241px; padding-left: 11px; background: #f7f7f7; border-radius: 8px 8px 0 0; color: #333; }
.newtab { width: 34px; }
.winctl { display: flex; margin-left: auto; }
.winctl button { width: 46px; }
.toolbar { display: flex; align-items: center; height: 37px; flex: none; padding: 0 0 0 18px; }
.toolbar > button { width: 44px; flex: none; }
.toolbar > button:first-child { width: 20px; margin-right: 12px; }
.toolbar > .fav { margin-right: 1px; }
.toolbar > .copilot { width: 42px; }
.urlbar { flex: 1; display: flex; align-items: center; gap: 15px; height: 30px; margin-left: 5px; padding-left: 19px; border-radius: 15px; background: #fff; }
.urlbar input { width: 300px; color: transparent; font-size: 13px; line-height: 20px; background: linear-gradient(90deg, #6a6a6a 44px, #111 44px, #111 95px, #6a6a6a 95px); background-clip: text; -webkit-background-clip: text; }

.page { flex: 1; min-height: 0; margin: 0 3px; padding: 12px 16px 0; background: #fff; border: 1px solid #e2e2e2; border-radius: 8px; font-family: Inter, sans-serif; overflow: hidden; }
.site-head { display: flex; align-items: flex-start; height: 36px; }
.site-head > svg { margin-top: 4px; }
.signup { margin-left: auto; width: 78px; height: 36px; border-radius: 4px; background: linear-gradient(#ff6561, #ff3b3b); color: #fff; font-size: 14px; }
.kebab { flex-direction: column; gap: 3px; width: 24px; height: 40px; margin: 0 4px 0 20px; }
.kebab i { width: 4px; height: 4px; border-radius: 2px; background: #222; }
.card { max-width: 1016px; margin: 52px auto 0; border: 1px solid #f2f2f2; border-radius: 10px; background: #fafafa; }
.preview { height: 257px; margin: 4px 3px 4px; border-radius: 8px; background: #ebebeb; }
.filebar { display: flex; align-items: center; height: 54px; padding: 0 8px 0 7px; border-top: 1px solid #eee; border-bottom: 1px solid #eee; }
.filebar h1 { margin: 0; font-size: 16px; line-height: 20px; font-weight: 500; color: #222; }
.filebar .size { margin-left: 17px; font-size: 14px; color: #3fc9b0; }
.filebar button { margin-left: auto; height: 36px; padding: 0 12px; border: 1px solid #ccc; border-radius: 4px; background: linear-gradient(#fff, #f5f5f5); font-size: 14px; color: #333; box-shadow: 0 1px 1px #bbb; }
.done { display: flex; align-items: center; gap: 9px; height: 57px; padding: 2px 8px 0; font-size: 14px; color: #12b899; }
.progress { height: 4px; margin: 0 8px 5px; border-radius: 2px; background: #30a67c; }
.banner { display: flex; align-items: flex-end; max-width: 728px; height: 90px; margin: 11px auto 0; padding: 0 24px 29px; color: #fff; font: 700 32px/32px Inter, sans-serif; background: radial-gradient(circle at 55% 110%, #ab2441 0, rgba(171, 36, 65, 0) 26%), radial-gradient(ellipse at 38% 0, #c21830 0, rgba(194, 24, 48, 0) 16%), linear-gradient(90deg, #421f4b 0 26%, #a31b35 46%, #a8150b 60%, #bc2419); }

.watermark { position: absolute; right: 46px; bottom: 9px; display: flex; align-items: center; gap: 5px; color: #fff; font: 33px/62px Roboto, "Liberation Sans", sans-serif; filter: drop-shadow(0 0 1px #c4c4c4) drop-shadow(0 0 2px #d5d5d5); }
.watermark svg { width: 60px; height: 62px; }

.explorer { position: absolute; left: 283px; top: 14px; width: 786px; height: 593px; display: flex; flex-direction: column; padding: 0 1px; background: #fff; box-shadow: 0 0 1px #bbb; }
.titlebar { display: flex; height: 31px; flex: none; }
.quick { display: flex; align-items: center; gap: 7px; width: 229px; padding-left: 8px; }
.quick .bar { width: 1px; height: 13px; background: #aaa; }
.quick .bar + svg { margin-left: 2px; }
.manage { display: flex; align-items: center; justify-content: center; width: 119px; margin-top: 4px; padding-top: 1px; background: #e9c7fb; color: #4a3355; font-size: 11px; }
h2 { margin: 0 0 0 13px; font-size: 11px; line-height: 32px; font-weight: 400; }
.wc { display: flex; margin-left: auto; }
.wc button { width: 46px; }
.ribbon-tabs { display: flex; align-items: stretch; height: 24px; flex: none; border-bottom: 1px solid #dcdddf; color: #333; font-size: 11px; }
.ribbon-tabs > svg { align-self: center; }
.file { width: 56px; background: #0063b1; color: #fff; }
.home { width: 58px; height: 24px; background: #f5f6f7; border: 1px solid #dcdddf; border-width: 1px 1px 0 0; }
.share { width: 59px; } .view { width: 54px; }
.apptools { width: 119px; margin-left: 2px; border: 1px solid #e4e4e4; border-width: 0 1px; }
.help { align-self: center; width: 16px; height: 16px; margin: 0 3px 0 10px; border-radius: 8px; background: #0a63b4; color: #fff; font-weight: 700; }
.ribbon { display: flex; height: 92px; flex: none; background: #f5f6f7; border-bottom: 1px solid #dadbdc; color: #222; font-size: 11px; }
.group { display: flex; flex-direction: column; margin: 3px 0; border-right: 1px solid #e1e2e4; }
.cmds { display: flex; height: 70px; flex: none; }
.caption { padding-top: 1px; text-align: center; color: #444; line-height: 20px; }
.clipboard { width: 263px; padding-left: 6px; } .organize { width: 165px; padding-left: 8px; } .new { width: 83px; padding-left: 4px; } .openg { width: 133px; padding-left: 2px; } .select { width: 115px; padding-left: 7px; }
.clipboard .caption, .organize .caption, .new .caption, .select .caption { padding-right: 8px; }
.big { flex-direction: column; justify-content: flex-start; padding-top: 5px; line-height: 13px; }
.big svg { margin-bottom: 2px; }
.big .dd { margin: 4px 0 0; }
.off { color: #8b8f94; }
.wpin { width: 66px; } .wcopy { width: 42px; } .wpaste { width: 42px; margin-right: 4px; } .wnew { width: 42px; margin-right: 3px; } .wprop { width: 58px; margin-right: 4px; }
.stack { display: flex; flex-direction: column; padding-top: 1px; }
.stack button { justify-content: flex-start; gap: 3px; height: 22px; }
.new .stack button { gap: 0; }
.loose { padding-top: 9px; gap: 7px; }
.divided { margin-left: 5px; padding-left: 6px; border-left: 1px solid #e1e2e4; }
.dd { width: 0; height: 0; margin-left: 1px; border: 3px solid transparent; border-top-color: #222; border-bottom-width: 0; }

.address { display: flex; align-items: center; height: 34px; flex: none; padding: 0 12px 0 12px; }
.arrows { display: flex; align-items: center; gap: 15px; width: 94px; }
.arrows button:nth-child(3) { margin-left: -2px; }
.arrows button:nth-child(4) { margin-left: -4px; }
.crumbs { flex: 1; display: flex; align-items: center; height: 22px; padding-left: 2px; border: 1px solid #d9d9d9; }
.crumbs a { color: #111; text-decoration: none; }
.sep { width: 5px; height: 5px; margin: 0 10px 0 6px; border: solid #666; border-width: 1px 1px 0 0; transform: rotate(45deg); }
.crumbs a + .sep { margin-left: 6px; }
.reload { width: 18px; height: 20px; margin-left: 2px; border-left: 1px solid #d9d9d9; }
.find { display: flex; align-items: center; width: 202px; height: 22px; margin-left: 12px; padding: 0 6px 0 8px; border: 1px solid #d9d9d9; }
.find input { flex: 1; min-width: 0; font-size: 11px; }
.find input::placeholder { color: #6b6b6b; opacity: 1; }

.body { display: flex; flex: 1; min-height: 0; }
.tree { width: 139px; margin: 0; padding: 1px 0 0; list-style: none; overflow: hidden; flex: none; font-size: 11px; }
.tree li { display: flex; align-items: center; gap: 5px; height: 24px; padding-left: 40px; white-space: nowrap; }
.tree .lvl0 { padding-left: 32px; } .tree .lvl2 { padding-left: 48px; }
.tree .sel { background: #d9d9d9; }
.vscroll { display: flex; flex-direction: column; align-items: center; justify-content: space-between; width: 16px; padding: 4px 0 3px; background: #f0f0f0; }
.vtrack { flex: 1; width: 100%; padding-top: 118px; }
.vthumb { height: 117px; background: #cdcdcd; }
.list { position: relative; flex: 1; min-width: 0; display: flex; flex-direction: column; padding-left: 5px; }
.sort { position: absolute; left: 142px; top: 0; width: 8px; height: 8px; }
table { width: calc(100% - 26px); margin: 1px 0 0 14px; table-layout: fixed; border-spacing: 0; border-collapse: separate; color: #6d6d6d; }
.c-name { width: 258px; } .c-date { width: 144px; } .c-type { width: 120px; }
th { height: 32px; padding: 0; vertical-align: top; text-align: left; font-weight: 400; color: #4c607a; }
th div { height: 26px; padding-left: 6px; line-height: 26px; border-right: 1px solid #e5e5e5; }
th:first-child div { padding-left: 3px; }
th:last-child div { margin-right: -4px; }
td { height: 21px; padding: 0 0 1px 6px; white-space: nowrap; border: solid transparent; border-width: 1px 0; line-height: 18px; }
td.fname { padding-left: 3px; color: #111; border-left-width: 1px; }
.fname span { display: flex; align-items: center; gap: 4px; }
td.digits { font-size: 11px; }
td.num { padding-right: 3px; text-align: right; border-right-width: 1px; }
.sel td { background: #cce8ff; border-color: #99d1ff; }
.hscroll { display: flex; align-items: center; gap: 4px; height: 15px; margin-top: auto; padding: 0 4px 0 3px; background: #f0f0f0; }
.hthumb { flex: 1; height: 15px; background: #cdcdcd; }
.status { display: flex; align-items: center; height: 25px; flex: none; padding: 0 4px 0 14px; color: #1e395b; white-space: nowrap; font-size: 11px; }
.count { width: 59px; } .chosen { width: 85px; }
.vbtn { width: 22px; height: 22px; }
.vbtn.on { background: #c8ecfb; border: 1px solid #3aa0d8; }

.taskbar { position: relative; display: flex; align-items: stretch; height: 40px; flex: none; background: linear-gradient(90deg, #00151f, #00131f 60%, #020a1e); color: #fff; }
.start { width: 48px; }
.tsearch { display: flex; align-items: center; gap: 10px; width: 288px; padding-left: 12px; background: #f1f1f1; border: 1px solid #c6c6c6; border-left: 0; }
.tsearch input { flex: 1; min-width: 0; font-size: 14px; line-height: 20px; color: #222; }
.tsearch input::placeholder { color: #3c3c3c; opacity: 1; }
.tb { width: 48px; margin-right: 1px; }
.view-tasks { margin-right: 3px; }
.run { background: linear-gradient(#76b9ed, #76b9ed) center bottom / 40px 2px no-repeat; }
.active { background: linear-gradient(#76b9ed, #76b9ed) center bottom / 48px 2px no-repeat, #32464f; }
.hover { background: #1b303a; }
.tray { display: flex; align-items: center; gap: 8px; margin-right: 8px; }
time { display: flex; flex-direction: column; justify-content: center; width: 56px; text-align: center; line-height: 18px; font-size: 11px; }
.notes { width: 48px; margin-right: 4px; }
.taskbar::after { content: ""; width: 4px; border-left: 1px solid #59636c; }
.tooltip { position: absolute; left: 485px; bottom: 40px; padding: 0 5px; background: #fff; border: 1px solid #666; color: #555; line-height: 18px; font-size: 11px; }
</style>
